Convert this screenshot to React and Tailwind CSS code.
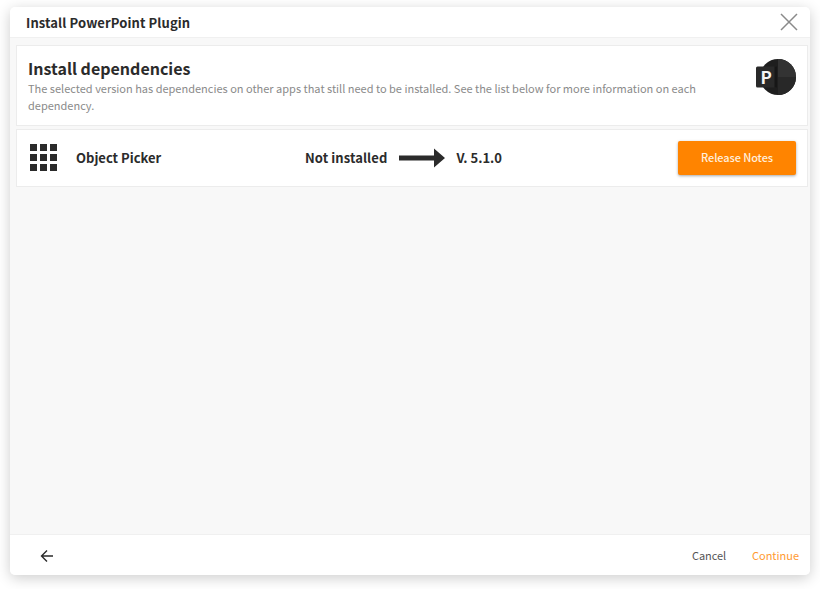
import React from "react";

function Grid() {
  return (
    <div className="grid grid-cols-3 gap-[3px] w-[27px] h-[27px] shrink-0 mb-[2px]">
      {[0,1,2,3,4,5,6,7,8].map((i) => (
        <div key={i} className="bg-[#2b2b2b]" />
      ))}
    </div>
  );
}

function PowerPointLogo() {
  return (
    <svg width="40" height="36" viewBox="0 0 40 36" className="shrink-0">
      <circle cx="22" cy="18" r="18" fill="#1e1e1e" />
      <path d="M22 18V0A18 18 0 0 1 40 18Z" fill="#333333" />
      <path d="M22 18H40A18 18 0 0 1 22 36Z" fill="#282828" />
      <rect x="0" y="7.5" width="21" height="21" rx="1.5" fill="#292929" />
      <path d="M18.5 7.5h2.5v21h-2.5z" fill="#161616" />
      <text x="4.5" y="24.5" fontSize="17" fontWeight="700" fill="#f5f5f5" fontFamily="'Noto Sans CJK SC', sans-serif">P</text>
    </svg>
  );
}

export default function App() {
  return (
    <div className="w-[820px] h-[589px] bg-white pt-[7px] px-[10px] overflow-hidden font-['Noto_Sans_CJK_SC',sans-serif]">
      <div className="w-[800px] h-[568px] flex flex-col bg-[#f8f8f8] rounded-[5px] shadow-[0_3px_14px_rgba(0,0,0,0.2)] overflow-hidden">
        <header className="h-[31px] shrink-0 bg-white flex items-center justify-between pl-[16px] pr-[12px] pt-[1px] border-b border-[#f0f0f0]">
          <h1 className="text-[13px] font-bold text-[#2b2b2b] tracking-[0.1px]">Install PowerPoint Plugin</h1>
          <svg width="18" height="18" viewBox="0 0 18 18" className="block -mt-[1px]">
            <path d="M1 1L17 17M17 1L1 17" stroke="#8a8a8a" strokeWidth="1.5" fill="none" />
          </svg>
        </header>

        <main className="flex-1 flex flex-col gap-[3px] pt-[7px] pl-[6px] pr-[2px]">
          <section className="h-[81px] bg-white border border-[#ececec] flex items-start justify-between pl-[11px] pr-[11px] pt-[13px]">
            <div className="w-[690px]">
              <h2 className="text-[16px] leading-[20px] -mt-[1px] font-bold text-[#2b2b2b]">Install dependencies</h2>
              <p className="text-[11px] leading-[17px] mt-[2px] text-[#8a8a8a]">
                The selected version has dependencies on other apps that still need to be installed. See the list below for more information on each dependency.
              </p>
            </div>
            <PowerPointLogo />
          </section>

          <section className="h-[58px] bg-white border border-[#ececec] flex items-center pl-[13px] pr-[11px]">
            <Grid />
            <div className="ml-[19px] w-[229px] text-[13px] font-bold text-[#2b2b2b] mb-[1px]">Object Picker</div>
            <div className="text-[13px] font-bold text-[#2b2b2b] tracking-[0.08px] mb-[1px]">Not installed</div>
            <svg width="46" height="20" viewBox="0 0 46 20" className="ml-[12px] shrink-0 mb-[1px]">
              <path d="M0 7.5H35V0.5L46 10L35 19.5V12.5H0Z" fill="#2b2b2b" />
            </svg>
            <div className="ml-[11px] text-[13px] font-bold text-[#2b2b2b] mb-[1px]">V. 5.1.0</div>
            <button className="ml-auto w-[118px] h-[34px] pb-[2px] bg-[#ff8400] rounded-[2px] text-[11px] font-medium text-[#ffeedd] tracking-[-0.1px] shadow-[0_1px_3px_rgba(0,0,0,0.35)]">
              Release Notes
            </button>
          </section>
        </main>

        <footer className="h-[41px] shrink-0 bg-white border-t border-[#f0f0f0] flex items-center pl-[30px] pr-[11px]">
          <svg width="14" height="14" viewBox="0 0 14 14" className="block mt-[1px]">
            <path d="M13 7H2M7 1.5L1.5 7L7 12.5" stroke="#2b2b2b" strokeWidth="1.4" fill="none" />
          </svg>
          <button className="ml-auto text-[11px] text-[#555555] tracking-[-0.1px]">Cancel</button>
          <button className="ml-[26px] text-[11px] text-[#ff9a30]">Continue</button>
        </footer>
      </div>
    </div>
  );
}
